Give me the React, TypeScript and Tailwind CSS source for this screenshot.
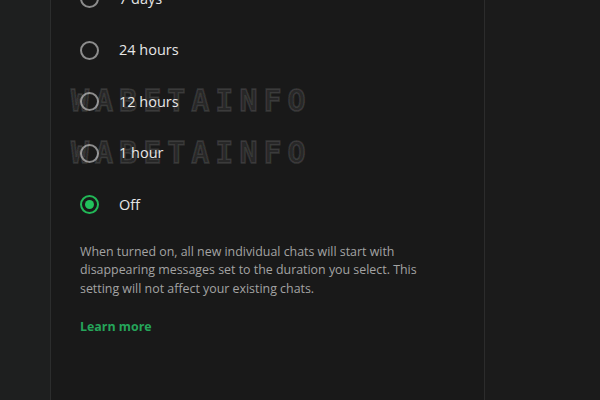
import React from 'react'

const options = ['7 days', '24 hours', '12 hours', '1 hour', 'Off']

const Radio = ({ checked }: { checked: boolean }) =>
  checked ? (
    <span className="flex h-[19px] w-[19px] items-center justify-center rounded-full border-2 border-[#22b857]">
      <span className="h-[9px] w-[9px] rounded-full bg-[#22c25c]" />
    </span>
  ) : (
    <span className="h-[19px] w-[19px] rounded-full border-2 border-[#8c8c8c]" />
  )

// faint watermark laid over the list
const Watermark = ({ top }: { top: number }) => (
  <div
    className="pointer-events-none absolute left-[20px] text-[30px] font-black tracking-[6px] text-white/[0.06] [-webkit-text-stroke:1.5px_rgba(255,255,255,0.12)] [font-family:'DejaVu_Sans_Mono',monospace] leading-none"
    style={{ top }}
  >
    WABETAINFO
  </div>
)

export default function App() {
  const selected = 'Off'
  return (
    <div className="flex h-[400px] w-[600px] overflow-hidden bg-[#1a1a1a] [font-family:'Open_Sans','Noto_Sans',sans-serif]">
      {/* left rail */}
      <div className="w-[51px] shrink-0 border-r border-[#2c2d2d] bg-[#1e1f1f]" />

      {/* settings panel */}
      <div className="relative w-[434px] shrink-0 border-r border-[#2c2c2c] bg-[#191919] pl-[29px]">
        <div className="mt-[-27px]">
          {options.map((o) => (
            <div key={o} className="flex h-[51.5px] items-center">
              <Radio checked={o === selected} />
              <span className="ml-[20px] text-[14.5px] text-[#e6e6e6]">{o}</span>
            </div>
          ))}
        </div>

        <p className="mt-[12px] text-[12.4px] leading-[18.5px] text-[#a3a3a3]">
          When turned on, all new individual chats will start with
          <br />
          disappearing messages set to the duration you select. This
          <br />
          setting will not affect your existing chats.
        </p>

        <div className="mt-[20px] text-[12.4px] leading-[18px] font-bold text-[#25a55a]">Learn more</div>

        <Watermark top={86} />
        <Watermark top={138} />
      </div>

      {/* right side */}
      <div className="flex-1 bg-[#1b1b1b]" />
    </div>
  )
}
